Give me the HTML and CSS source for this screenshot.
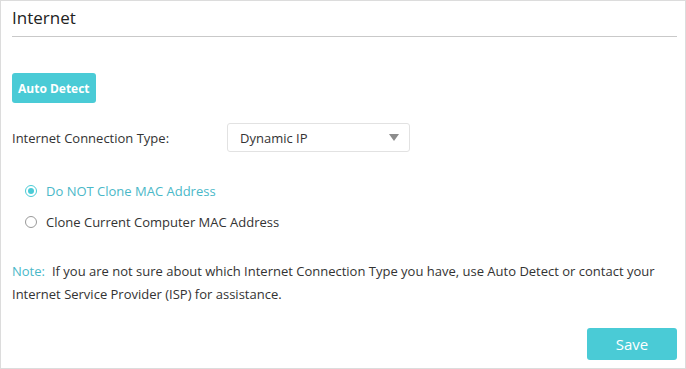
FILE: index.html
```html
<!DOCTYPE html>
<html lang="en">
<head>
  <meta charset="UTF-8">
  <title>Internet</title>
  <link rel="stylesheet" href="styles.css">
</head>
<body>

<div class="panel">
  <h2 class="panel-title">Internet</h2>

  <div class="row">
    <button type="button" class="btn btn-detect">Auto Detect</button>
  </div>

  <div class="form-row">
    <label class="form-label" for="connType">Internet Connection Type:</label>
    <div class="select-box" id="connType">
      <span class="select-value">Dynamic IP</span>
      <span class="select-arrow"></span>
    </div>
  </div>

  <div class="radio-group">
    <label class="radio checked">
      <span class="radio-dot"></span>
      <span class="radio-text">Do NOT Clone MAC Address</span>
    </label>
    <label class="radio">
      <span class="radio-dot"></span>
      <span class="radio-text">Clone Current Computer MAC Address</span>
    </label>
  </div>

  <p class="note"><span class="note-tag">Note:</span><span class="note-text">If you are not sure about which Internet Connection Type you have, use Auto Detect or contact your Internet Service Provider (ISP) for assistance.</span></p>

  <div class="actions">
    <button type="button" class="btn btn-save">Save</button>
  </div>
</div>

</body>
</html>
```

FILE: styles.css
```css
body {
  font-family: "Open Sans", Arial, sans-serif;
  margin: 0;
  padding: 0;
  background-color: #fff;
  color: #333;
}

.panel {
  box-sizing: border-box;
  width: 686px;
  height: 369px;
  border: 1px solid #dcdcdc;
  padding: 0 8px 0 11px;
}

.panel-title {
  margin: 0;
  padding: 6px 0 7px 0;
  font-size: 17px;
  font-weight: normal;
  color: #222;
  line-height: 22px;
  border-bottom: 1px solid #c9c9c9;
}

.row {
  margin-top: 36px;
}

.btn {
  font-family: inherit;
  border: none;
  border-radius: 3px;
  background-color: #4acbd6;
  color: #fff;
  cursor: pointer;
}

.btn-detect {
  height: 30px;
  padding: 0 6px;
  font-size: 12px;
  font-weight: bold;
}

.form-row {
  display: flex;
  align-items: center;
  margin-top: 20px;
}

.form-label {
  width: 215px;
  font-size: 13px;
  color: #333;
}

.select-box {
  box-sizing: border-box;
  width: 183px;
  height: 29px;
  border: 1px solid #e2e2e2;
  border-radius: 3px;
  display: flex;
  align-items: center;
  justify-content: space-between;
  padding: 0 10px 0 12px;
  font-size: 13px;
  color: #333;
}

.select-arrow {
  width: 0;
  height: 0;
  border-left: 5px solid transparent;
  border-right: 5px solid transparent;
  border-top: 7px solid #8c8c8c;
}

.radio-group {
  margin-top: 23px;
  padding-left: 12px;
}

.radio {
  display: flex;
  align-items: center;
  height: 31px;
  font-size: 13px;
  color: #333;
}

.radio-dot {
  box-sizing: border-box;
  width: 12px;
  height: 12px;
  border: 1px solid #999;
  border-radius: 50%;
  margin-right: 9px;
  margin-left: 1px;
  position: relative;
}

.radio.checked .radio-dot {
  border-color: #4acbd6;
}

.radio.checked .radio-dot::after {
  content: "";
  position: absolute;
  left: 2px;
  top: 2px;
  width: 6px;
  height: 6px;
  border-radius: 50%;
  background-color: #4acbd6;
}

.radio.checked .radio-text {
  color: #4ab8c8;
}

.note {
  margin: 23px 0 0 0;
  font-size: 13px;
  line-height: 23px;
  color: #333;
}

.note-tag {
  color: #4ab8c8;
  margin-right: 7px;
}

.actions {
  display: flex;
  justify-content: flex-end;
  margin-top: 22px;
}

.btn-save {
  width: 90px;
  height: 32px;
  font-size: 15px;
}
```
